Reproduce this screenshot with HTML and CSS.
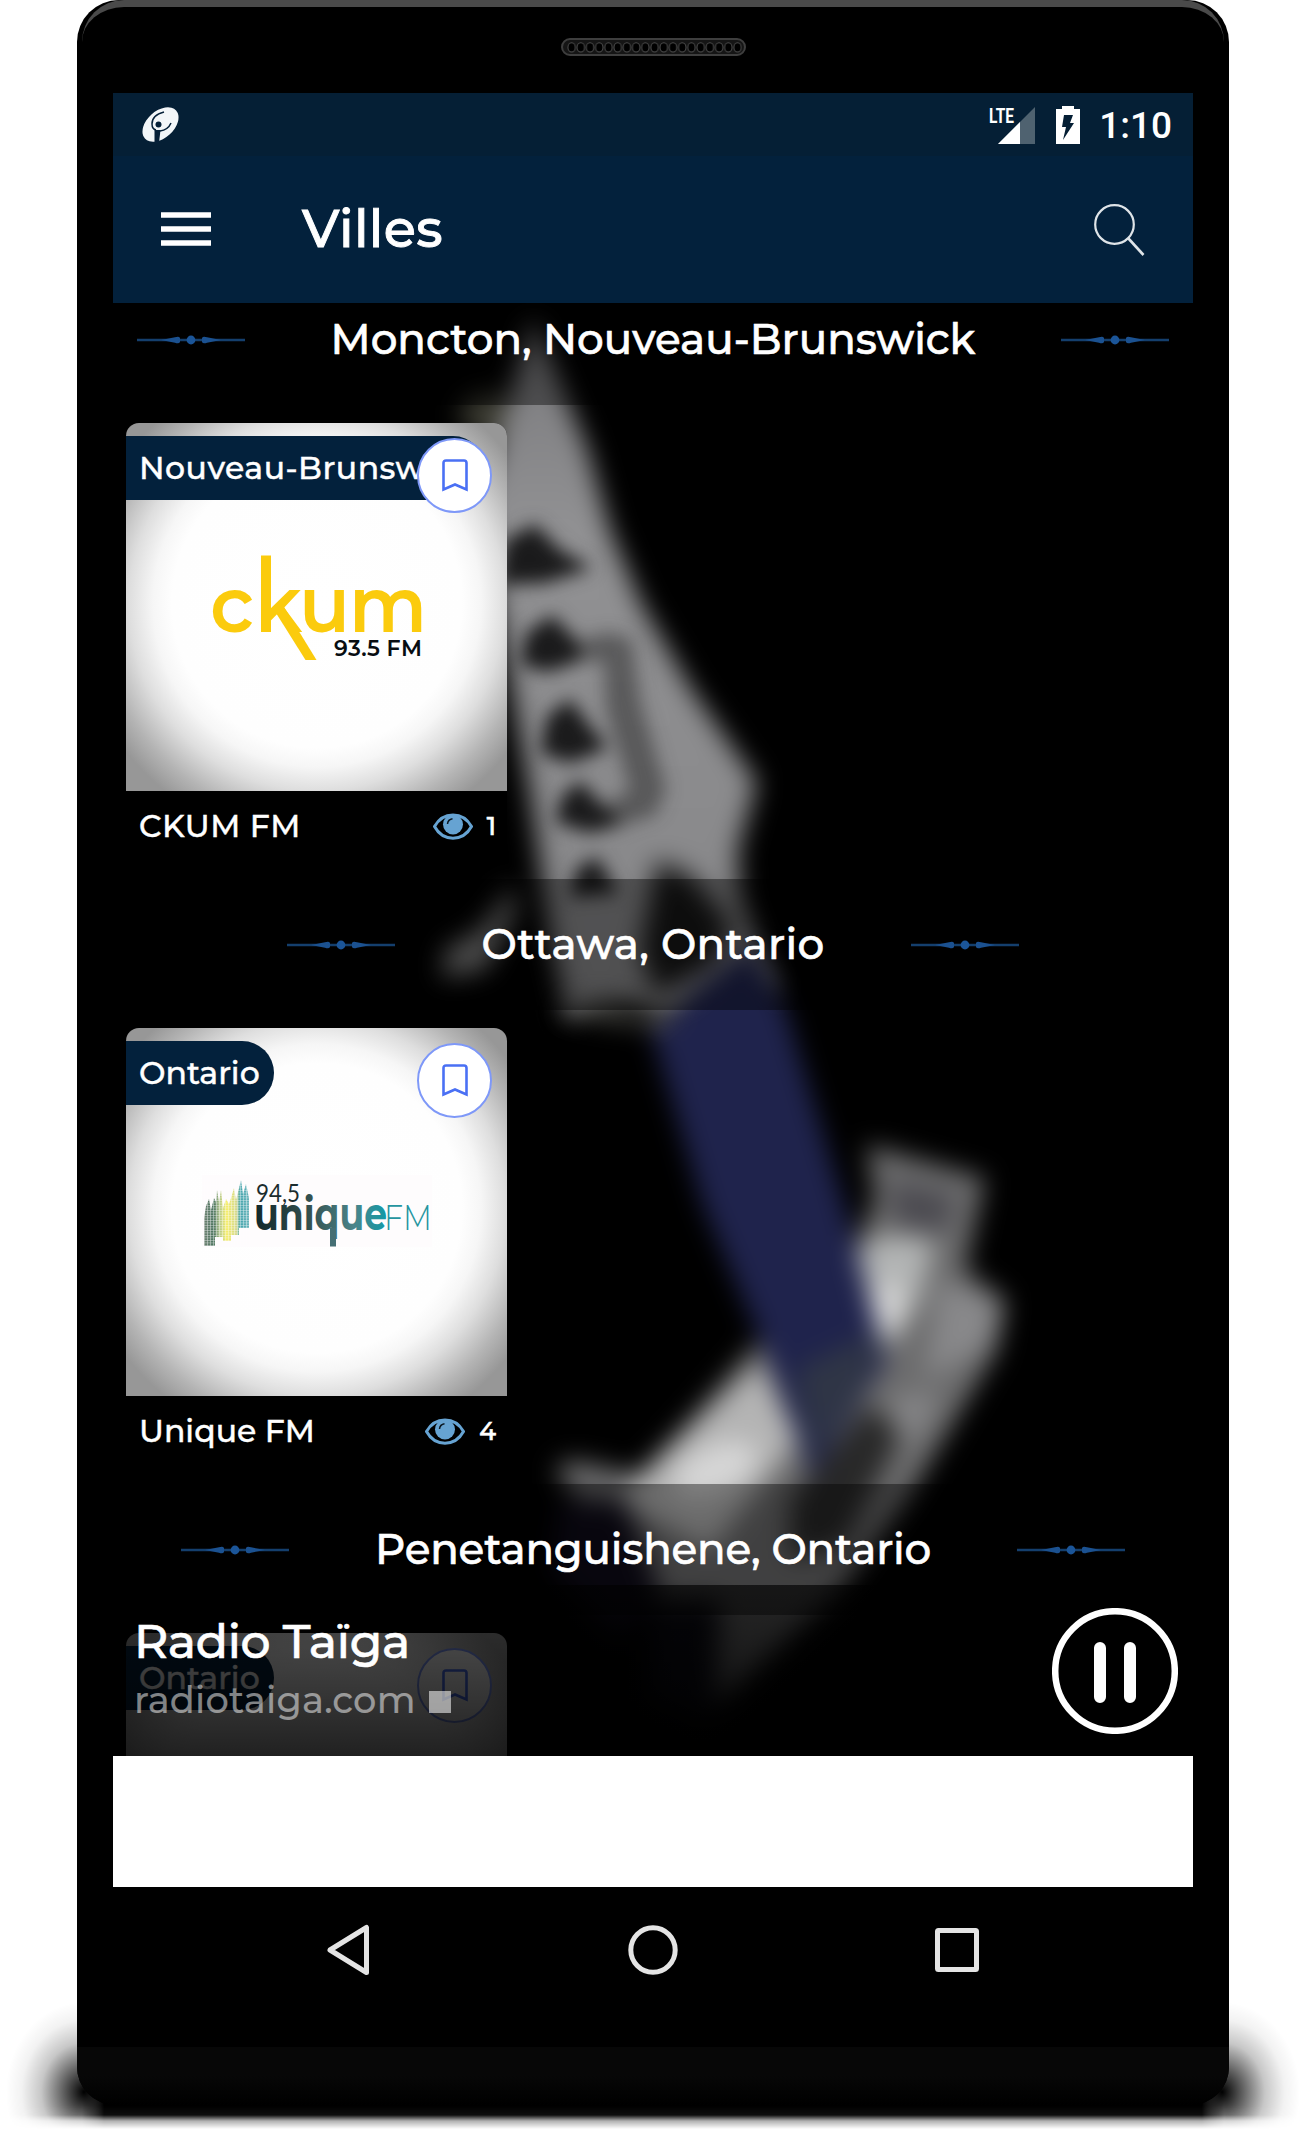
FILE: index.html
```html
<!DOCTYPE html>
<html lang="fr">
<head>
  <meta charset="UTF-8">
  <meta name="viewport" content="width=device-width, initial-scale=1.0">
  <title>Villes</title>
  <link rel="stylesheet" href="styles.css">
</head>
<body>
  <!-- Formes partagées -->
  <svg class="defs" width="0" height="0">
    <symbol id="ornament" viewBox="0 0 108 14">
      <path d="M0 7H108" stroke="#143f6d" stroke-width="2.4"/>
      <path d="M24 7L38 4.3Q42 3 43 5V9Q42 11 38 9.7ZM84 7L70 4.3Q66 3 65 5V9Q66 11 70 9.7Z" fill="#1b5190"/>
      <circle cx="54" cy="7" r="4.4" fill="#1b5598"/>
    </symbol>
    <symbol id="bookmark" viewBox="0 0 26 33">
      <path d="M1.5 30.5V4Q1.5 1.5 4 1.5H22Q24.5 1.5 24.5 4V30.5L13 25.500Z" fill="none" stroke="#4a70f4" stroke-width="2.6"/>
    </symbol>
    <symbol id="eye" viewBox="0 0 40 27">
      <path d="M1.500 13.500C10 -2 30 -2 38.500 13.500C30 29 10 29 1.500 13.500Z" fill="none" stroke="#66a3d2" stroke-width="3"/>
      <circle cx="20" cy="11.500" r="10" fill="#66a3d2"/>
      <path d="M14.500 11Q15 6.500 19.500 5.800" fill="none" stroke="#0a1620" stroke-width="1.500"/>
    </symbol>
  </svg>

  <div class="phone">
    <div class="speaker">
      <svg width="185" height="18" viewBox="0 0 185 18">
        <defs>
          <pattern id="holes" width="9.22" height="18" patternUnits="userSpaceOnUse" x="6">
            <ellipse cx="4.600" cy="9.400" rx="3.700" ry="4.600" fill="#000" stroke="#4c4c4c" stroke-width="1"/>
          </pattern>
        </defs>
        <rect x="1" y="1" width="183" height="16" rx="8" fill="#151515" stroke="#3e3e3e" stroke-width="2"/>
        <rect x="6" y="2" width="175" height="14" fill="url(#holes)"/>
      </svg>
    </div>

    <div class="screen">
      <svg class="backdrop" width="1080" height="1794" viewBox="113 93 1080 1794">
        <defs>
          <filter id="soft" x="-20%" y="-20%" width="140%" height="140%" color-interpolation-filters="sRGB"><feGaussianBlur stdDeviation="13"/></filter>
          <filter id="spots" x="-40%" y="-40%" width="180%" height="180%" color-interpolation-filters="sRGB"><feGaussianBlur stdDeviation="9"/></filter>
          <linearGradient id="blade" x1="0" y1="0" x2="0" y2="1">
            <stop offset="0" stop-color="#77777a"/>
            <stop offset=".3" stop-color="#919193"/>
            <stop offset="1" stop-color="#858587"/>
          </linearGradient>
        </defs>
        <g filter="url(#soft)">
          <ellipse cx="490" cy="415" rx="30" ry="22" fill="#3c3c32"/>
          <path d="M533 318L557 375L588 450L610 530L642 605L692 690L757 782L738 850L740 895L760 950L780 990L680 1028L630 1002L567 1018L551 940L531 800L500 620L480 500Z" fill="url(#blade)"/>
          <path d="M657 860L690 875L732 925L715 965L655 995L640 950Z" fill="#161616"/>
          <path d="M442 978L445 950L480 930L515 885L515 912L485 970Z" fill="#808080"/>
        </g>
        <g filter="url(#spots)" fill="#1a1a1b">
          <path d="M498 585L505 540L535 524L560 550L592 568L545 583Z"/>
          <path d="M520 665L526 633L552 615L576 640L582 660L548 672Z"/>
          <path d="M540 753L547 716L570 699L591 728L608 748L570 763Z"/>
          <path d="M555 822L562 796L580 781L603 806L622 822L590 833Z"/>
          <path d="M570 897L576 869L597 857L618 893Z"/>
          <path d="M570 642L610 632L632 640L640 700L666 790L655 815L600 832L600 808L630 790L606 710L604 662L570 660Z" opacity=".45"/>
        </g>
        <g filter="url(#soft)">
          <path d="M867 1145L985 1178L965 1270L1005 1300L997 1350L955 1420L910 1495L840 1590L700 1720L655 1600L625 1550L555 1472L570 1460L640 1475L690 1420L755 1345L870 1300L855 1245L875 1200Z" fill="#6c6c6d"/>
          <path d="M837 1262L885 1235L935 1240L920 1300L890 1345L865 1350Z" fill="#b2b4b4"/>
          <ellipse cx="886" cy="1308" rx="18" ry="26" fill="#d6d6d6"/>
          <path d="M890 1180L955 1195L945 1235L895 1225Z" fill="#4c4b51"/>
          <path d="M640 1475L760 1364L798 1440L710 1550L615 1500Z" fill="#b4b4b4"/>
          <ellipse cx="715" cy="1470" rx="45" ry="24" transform="rotate(-25 715 1470)" fill="#d6d6d6"/>
          <path d="M870 1405L900 1435L845 1545L790 1560L790 1500Z" fill="#282828"/>
          <path d="M560 1500L625 1500L660 1590L620 1640L550 1570Z" fill="#0e0b18"/>
          <path d="M650 1600L720 1600L715 1720L650 1700Z" fill="#0b0b14"/>
          <path d="M940 1280L1005 1305L990 1345L925 1380Z" fill="#88888a"/>
          <path d="M890 1400L930 1390L935 1410L905 1450Z" fill="#858587"/>
          <path d="M650 1025L750 945L783 1000L843 1200L886 1360L858 1405L812 1478L765 1350L703 1205Z" fill="#1f234c"/>
          <path d="M795 1370L880 1330L865 1390L812 1460Z" fill="#2f3546"/>
          <path d="M560 1012L600 1000L650 1015L690 1000L660 1030Z" fill="#484844"/>
          <path d="M580 1026L640 1022L650 1060L590 1060Z" fill="#000"/>
        </g>
      </svg>

      <div class="status-bar">
        <svg class="app-mark" width="40" height="36" viewBox="0 0 40 36">
          <ellipse cx="20.500" cy="17.500" rx="13.500" ry="21" transform="rotate(48 20.500 17.500)" fill="#f3f6f8"/>
          <path d="M24 5Q12 8 12 17Q12 22 16 23M31 16Q28 23 20 24" fill="none" stroke="#062038" stroke-width="1.500"/>
          <path d="M14.500 23H20.500L19 36H14.500Z" fill="#062038"/>
          <circle cx="18.500" cy="17.500" r="3" fill="#062038"/>
        </svg>
        <div class="status-right">
          <svg class="signal" width="46" height="38" viewBox="0 0 46 38">
            <text class="lte" x="0" y="17" textLength="25" lengthAdjust="spacingAndGlyphs">LTE</text>
            <path d="M46 1V38H9Z" fill="#4f6270"/>
            <path d="M31 16V38H9Z" fill="#fff"/>
          </svg>
          <svg class="battery" width="24" height="38" viewBox="0 0 24 38">
            <path d="M0 3H6V0H18V3H24V38H0Z" fill="#fff"/>
            <path d="M8 9H17L14 17H18L7 34L10 21H6Z" fill="#051f35"/>
          </svg>
          <span class="clock">1:10</span>
        </div>
      </div>

      <header class="toolbar">
        <svg class="menu" width="50" height="36" viewBox="0 0 50 36"><path d="M0 4H50M0 18H50M0 32H50" stroke="#fff" stroke-width="5.400"/></svg>
        <h1>Villes</h1>
        <svg class="search" width="52" height="54" viewBox="0 0 52 54">
          <circle cx="21.500" cy="21.500" r="19.300" fill="none" stroke="#dfe4e8" stroke-width="2.200"/>
          <path d="M35 35L50.500 52" stroke="#dfe4e8" stroke-width="2.600"/>
        </svg>
      </header>

      <main class="list">
        <section class="city">
          <h2><svg><use href="#ornament"/></svg><span>Moncton, Nouveau-Brunswick</span><svg><use href="#ornament"/></svg></h2>
          <article class="card">
            <div class="cover">
              <span class="region region-long">Nouveau-Brunswick</span>
              <span class="fav"><svg><use href="#bookmark"/></svg></span>
              <svg class="logo" width="381" height="368" viewBox="126 423 381 368">
                <g class="ckum">
                  <text x="210" y="632" textLength="44" lengthAdjust="spacingAndGlyphs">c</text>
                  <text x="255" y="632" textLength="47" lengthAdjust="spacingAndGlyphs">k</text>
                  <text x="299" y="632" textLength="51" lengthAdjust="spacingAndGlyphs">u</text>
                  <text x="349" y="632" textLength="78" lengthAdjust="spacingAndGlyphs">m</text>
                  <rect x="261" y="555.500" width="10" height="76.500"/>
                  <path d="M276 613L284 607L316.500 660H305.500Z"/>
                </g>
                <text class="freq" x="334" y="656" textLength="88">93.5 FM</text>
              </svg>
            </div>
            <div class="info"><span class="call-sign">CKUM FM</span><span class="views"><svg><use href="#eye"/></svg>1</span></div>
          </article>
        </section>

        <section class="city">
          <h2 class="short"><svg><use href="#ornament"/></svg><span>Ottawa, Ontario</span><svg><use href="#ornament"/></svg></h2>
          <article class="card">
            <div class="cover">
              <span class="region">Ontario</span>
              <span class="fav"><svg><use href="#bookmark"/></svg></span>
              <svg class="logo" width="381" height="368" viewBox="126 1028 381 368">
                <defs>
                  <linearGradient id="teal" gradientUnits="userSpaceOnUse" x1="257" y1="0" x2="386" y2="0">
                    <stop offset="0" stop-color="#12292c"/>
                    <stop offset=".4" stop-color="#33504f"/>
                    <stop offset=".75" stop-color="#4b8489"/>
                    <stop offset="1" stop-color="#1599a6"/>
                  </linearGradient>
                  <linearGradient id="wheat" gradientUnits="userSpaceOnUse" x1="204" y1="0" x2="249" y2="0">
                    <stop offset="0" stop-color="#6b8070"/>
                    <stop offset=".22" stop-color="#4c7560"/>
                    <stop offset=".35" stop-color="#b5c98c"/>
                    <stop offset=".5" stop-color="#f5ee6a"/>
                    <stop offset=".72" stop-color="#d5d98c"/>
                    <stop offset=".8" stop-color="#45a5ad"/>
                    <stop offset="1" stop-color="#6bb5bb"/>
                  </linearGradient>
                  <pattern id="dots" width="3" height="2.500" patternUnits="userSpaceOnUse">
                    <path d="M0 0H3M0 0V2.500" stroke="#fefcfd" stroke-width="1" opacity=".8"/>
                  </pattern>
                </defs>
                <rect x="202" y="1175" width="230" height="72" fill="#fefcfd"/>
                <path fill="url(#wheat)" d="M204 1246V1218L206 1206L209 1199L211 1210L214 1198L216 1202L217 1190L219 1202L221 1190L223 1208L226 1199L229 1204L231 1198L234 1188L236 1200L238 1192L241 1180L243 1194L246 1184L249 1198V1228H239V1235H231V1241H223V1237H215V1246Z"/>
                <path fill="url(#dots)" d="M202 1178H250V1247H202Z"/>
                <text class="uq-freq" x="256" y="1201.500" textLength="44" lengthAdjust="spacingAndGlyphs">94,5</text>
                <text class="uq" x="254" y="1230" textLength="133" lengthAdjust="spacingAndGlyphs">unique</text>
                <path d="M330 1228H336V1246.500H330Z" fill="#456f74"/>
                <text class="uq-fm" x="384" y="1230" textLength="48" lengthAdjust="spacingAndGlyphs">FM</text>
              </svg>
            </div>
            <div class="info"><span>Unique FM</span><span class="views"><svg><use href="#eye"/></svg>4</span></div>
          </article>
        </section>

        <section class="city">
          <h2 class="long"><svg><use href="#ornament"/></svg><span>Penetanguishene, Ontario</span><svg><use href="#ornament"/></svg></h2>
          <article class="card">
            <div class="cover">
              <span class="region">Ontario</span>
              <span class="fav"><svg><use href="#bookmark"/></svg></span>
            </div>
          </article>
        </section>
      </main>

      <div class="player">
        <div class="now">
          <div class="station">Radio Taïga</div>
          <div class="track">radiotaiga.com <i class="square"></i></div>
        </div>
        <svg width="126" height="126" viewBox="0 0 126 126">
          <circle cx="63" cy="63" r="59.800" fill="none" stroke="#fff" stroke-width="6.500"/>
          <path d="M48 40V89M78 40V89" stroke="#fff" stroke-width="12" stroke-linecap="round"/>
        </svg>
      </div>
      <div class="banner"></div>

      <nav class="nav-bar">
        <svg width="52" height="52" viewBox="0 0 52 52"><path d="M7 26L43.500 3.500V48.500Z"/></svg>
        <svg width="52" height="52" viewBox="0 0 52 52"><circle cx="26" cy="26" r="22.200"/></svg>
        <svg width="52" height="52" viewBox="0 0 52 52"><rect x="6.500" y="6.500" width="39" height="39" rx="1"/></svg>
      </nav>
    </div>
    <div class="chin"></div>
  </div>
</body>
</html>
```
FILE: styles.css
```css
* {
  box-sizing: border-box;
}

body {
  margin: 0;
  height: 2130px;
  background: #fff;
  color: #fff;
  font-family: Montserrat, Inter, sans-serif;
  font-weight: 500;
  position: relative;
  overflow: hidden;
}

.defs {
  position: absolute;
}

/* ombre au sol */
body::before {
  content: "";
  position: absolute;
  left: 0;
  top: 2000px;
  width: 1305px;
  height: 130px;
  background:
    radial-gradient(78px 90px at 84px 92px, #000, rgba(0, 0, 0, 0.6) 28%, rgba(0, 0, 0, 0.22) 55%, rgba(0, 0, 0, 0.05) 80%, transparent),
    radial-gradient(78px 90px at 1222px 92px, #000, rgba(0, 0, 0, 0.6) 28%, rgba(0, 0, 0, 0.22) 55%, rgba(0, 0, 0, 0.05) 80%, transparent),
    linear-gradient(90deg, transparent, #000 22px, #000 1120px, transparent) 82px 0 / 1142px 100% no-repeat;
  -webkit-mask-image: linear-gradient(#000 106px, rgba(0, 0, 0, 0.95) 115px, rgba(0, 0, 0, 0.3) 121px, transparent 129px);
  mask-image: linear-gradient(#000 106px, rgba(0, 0, 0, 0.95) 115px, rgba(0, 0, 0, 0.3) 121px, transparent 129px);
}

.phone {
  position: relative;
  z-index: 1;
  width: 1152px;
  height: 2105px;
  margin-left: 77px;
  padding: 0 36px;
  background: #000;
  border-radius: 42px 42px 38px 38px;
  overflow: hidden;
  display: flex;
  flex-direction: column;
}

/* reflet du bord haut */
.phone::before {
  content: "";
  position: absolute;
  inset: 0 5px auto;
  height: 60px;
  border-top: 7px solid #4a4a4a;
  border-radius: 42px 42px 0 0;
}

.speaker {
  height: 93px;
  padding-top: 38px;
  text-align: center;
  line-height: 0;
}

.screen {
  position: relative;
  height: 1920px;
  display: flex;
  flex-direction: column;
  overflow: hidden;
}

.backdrop {
  position: absolute;
  left: 0;
  top: 0;
}

.status-bar {
  position: relative;
  z-index: 2;
  height: 63px;
  padding: 0 21px 0 27px;
  background: #051f35;
  display: flex;
  align-items: center;
  justify-content: space-between;
}

.status-right {
  display: flex;
  align-items: center;
}

.signal {
  overflow: visible;
}

.lte {
  font: 700 21px Roboto, sans-serif;
  fill: #fff;
}

.battery {
  margin: 0 19px 0 21px;
}

.clock {
  font: 500 37px/44px Roboto, sans-serif;
  margin-top: 3px;
}

.toolbar {
  position: relative;
  z-index: 2;
  height: 147px;
  padding: 0 48px;
  background: #03213c;
  display: flex;
  align-items: center;
}

.menu {
  margin-bottom: 2px;
}

.toolbar h1 {
  margin: 0 0 4px 91px;
  font-size: 52.5px;
  font-weight: 500;
  letter-spacing: 0.3px;
  -webkit-text-stroke: 0.9px #fff;
}

.search {
  margin-left: auto;
}

.list {
  position: relative;
  height: 1453px;
  margin-top: -29px;
  flex: none;
}

.city {
  height: 605px;
}

.city h2 {
  margin: 0;
  height: 131px;
  background: rgba(0, 0, 0, 0.4);
  display: flex;
  align-items: center;
  justify-content: center;
  gap: 86px;
  font-size: 42px;
  font-weight: 500;
  white-space: nowrap;
  -webkit-text-stroke: 0.6px #fff;
}

.city h2.short {
  letter-spacing: 0.4px;
}

.city h2.long {
  letter-spacing: -0.2px;
}

.city h2 span {
  margin-bottom: 2px;
}

.city h2 svg {
  width: 108px;
  height: 14px;
}

.card {
  width: 381px;
  height: 438px;
  margin: 18px 0 0 13px;
  border-radius: 13px;
  overflow: hidden;
  background: rgba(0, 0, 0, 0.93);
}

.cover {
  position: relative;
  height: 368px;
  padding-top: 13px;
  background: radial-gradient(circle at 191px 180px, #fff 0, #fefefe 145px, #f6f6f6 164px, #dedede 188px, #b4b4b4 218px, #979797 242px);
}

.region {
  display: inline-block;
  height: 64px;
  padding: 0 14px 0 13px;
  border-radius: 0 32px 32px 0;
  background: #03213c;
  font-size: 31.5px;
  line-height: 64px;
  white-space: nowrap;
  -webkit-text-stroke: 0.4px #fff;
}

.region-long {
  width: 359px;
  overflow: hidden;
  letter-spacing: 0.5px;
}

/* bouton favori posé sur la pochette */
.fav {
  position: absolute;
  right: 15px;
  top: 15px;
  z-index: 1;
  width: 75px;
  height: 75px;
  border: 2px solid #7e98f8;
  border-radius: 50%;
  background: #fff;
  display: flex;
  align-items: center;
  justify-content: center;
}

.fav svg {
  width: 26px;
  height: 33px;
}

.logo {
  position: absolute;
  left: 0;
  top: 0;
}

.ckum {
  fill: #fbcb0d;
  font: 600 78px Montserrat, Inter, sans-serif;
}

.freq {
  font: 600 22px Montserrat, Inter, sans-serif;
  fill: #080d12;
}

.uq {
  font: 700 45px Montserrat, Inter, sans-serif;
  fill: url(#teal);
}

.uq-freq {
  font: 400 25px Lato, sans-serif;
  fill: #1b2c2e;
}

.uq-fm {
  font: 300 35px Montserrat, Lato, sans-serif;
  fill: #2595a0;
}

.info {
  height: 70px;
  padding: 0 11px 0 13px;
  display: flex;
  align-items: center;
  justify-content: space-between;
  font-size: 31.5px;
  -webkit-text-stroke: 0.4px #fff;
}

.call-sign {
  letter-spacing: 0.5px;
}

.views {
  display: flex;
  align-items: center;
  gap: 14px;
  font-size: 25px;
  -webkit-text-stroke: 0.6px #fff;
}

.views svg {
  width: 40px;
  height: 27px;
}

.player {
  position: relative;
  z-index: 1;
  height: 171px;
  margin-top: -142px;
  padding: 0 15px 0 21px;
  background: linear-gradient(rgba(0, 0, 0, 0.65), rgba(0, 0, 0, 0.87));
  display: flex;
  align-items: center;
  justify-content: space-between;
  flex: none;
}

.station {
  font-size: 47.25px;
  line-height: 58px;
  letter-spacing: -0.3px;
  -webkit-text-stroke: 0.6px #fff;
}

.track {
  font-size: 36.75px;
  line-height: 60px;
  letter-spacing: 0.2px;
  color: rgba(255, 255, 255, 0.5);
}

.square {
  display: inline-block;
  width: 22px;
  height: 22px;
  margin-left: 3px;
  background: rgba(255, 255, 255, 0.55);
}

.banner {
  position: relative;
  z-index: 1;
  height: 131px;
  background: #fff;
  flex: none;
}

.nav-bar {
  position: relative;
  z-index: 1;
  height: 126px;
  background: #000;
  display: flex;
  align-items: center;
  justify-content: center;
  gap: 252px;
  flex: none;
}

.nav-bar svg {
  fill: none;
  stroke: #e4e4e4;
  stroke-width: 5;
  stroke-linejoin: round;
}

.chin {
  margin: 34px -36px 0;
  height: 58px;
  background: linear-gradient(#070707 50%, #000);
}
```
